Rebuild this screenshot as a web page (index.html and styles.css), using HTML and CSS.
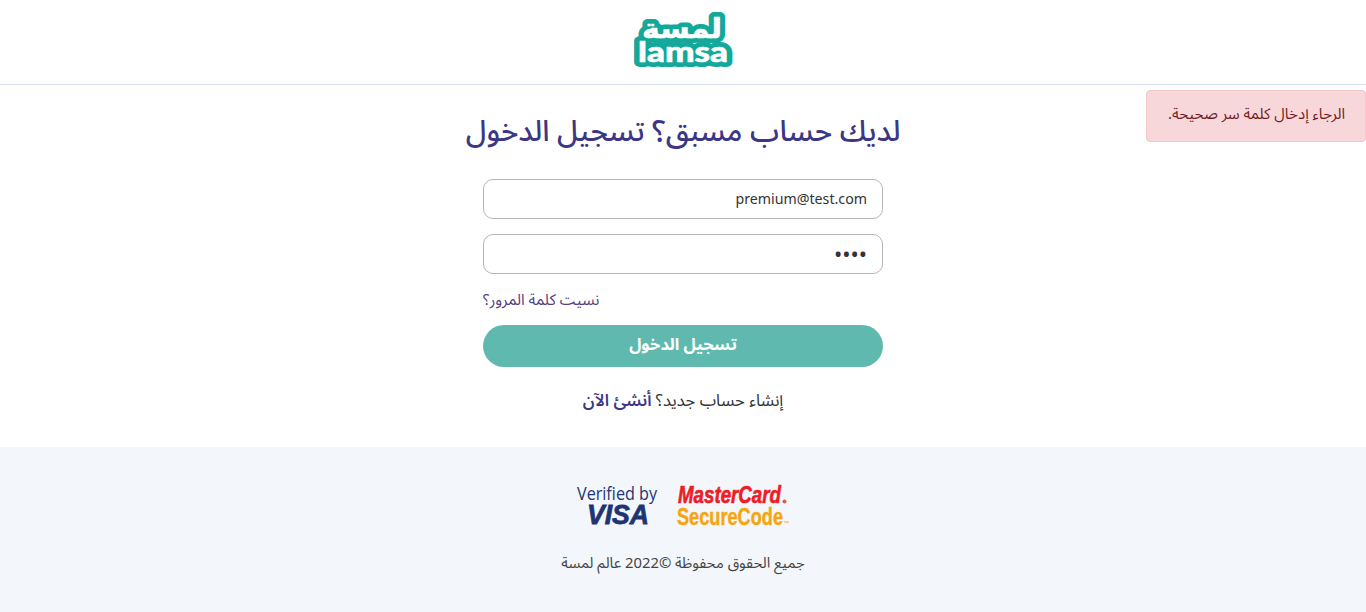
FILE: index.html
```html
<!DOCTYPE html>
<html lang="ar" dir="rtl">
<head>
<meta charset="utf-8">
<title>لمسة</title>
<link rel="stylesheet" href="styles.css">
</head>
<body>
<header class="site-header">
  <svg class="logo" width="104" height="70" viewBox="0 0 104 70" aria-label="lamsa">
    <g class="logo-outline">
      <text x="51" y="32" class="logo-ar" text-anchor="middle" textLength="80" lengthAdjust="spacingAndGlyphs">لمسة</text>
      <text x="52" y="56" class="logo-en" text-anchor="middle" textLength="90" lengthAdjust="spacingAndGlyphs">lamsa</text>
    </g>
    <g class="logo-fill">
      <text x="51" y="32" class="logo-ar" text-anchor="middle" textLength="80" lengthAdjust="spacingAndGlyphs">لمسة</text>
      <text x="52" y="56" class="logo-en" text-anchor="middle" textLength="90" lengthAdjust="spacingAndGlyphs">lamsa</text>
    </g>
  </svg>
</header>
<main class="login">
  <h1 class="title">لديك حساب مسبق؟ تسجيل الدخول</h1>
  <form class="form">
    <input class="field" type="text" dir="ltr" value="premium@test.com">
    <input class="field field-pass" type="password" dir="ltr" value="1234">
    <a class="forgot" href="#">نسيت كلمة المرور؟</a>
    <button class="submit" type="button">تسجيل الدخول</button>
    <p class="signup">إنشاء حساب جديد؟ <a href="#">أنشئ الآن</a></p>
  </form>
</main>
<footer class="site-footer">
  <div class="badges">
    <svg class="badge" width="90" height="46" viewBox="0 0 90 46" aria-label="Verified by Visa">
      <text x="44" y="15" class="visa-top" text-anchor="middle" textLength="80" lengthAdjust="spacingAndGlyphs">Verified by</text>
      <text x="45" y="39" class="visa-name" text-anchor="middle" textLength="62" lengthAdjust="spacingAndGlyphs">VISA</text>
    </svg>
    <svg class="badge" width="116" height="46" viewBox="0 0 116 46" aria-label="MasterCard SecureCode">
      <text x="1" y="18" class="mc-top" textLength="103" lengthAdjust="spacingAndGlyphs">MasterCard</text>
      <circle cx="107.5" cy="16.5" r="2" class="mc-dot"></circle>
      <text x="0" y="40" class="mc-bottom" textLength="106" lengthAdjust="spacingAndGlyphs">SecureCode</text>
      <text x="106" y="40" class="mc-tm">™</text>
    </svg>
  </div>
  <p class="copy">جميع الحقوق محفوظة ©2022 عالم لمسة</p>
</footer>
<div class="toast">الرجاء إدخال كلمة سر صحيحة.</div>
</body>
</html>
```
FILE: styles.css
```css
* { box-sizing: border-box; }
html, body { margin: 0; padding: 0; }
body {
  position: relative;
  height: 612px;
  overflow: hidden;
  background: #fff;
  color: #333;
  font-family: "Noto Sans", "Noto Sans Arabic", "DejaVu Sans", sans-serif;
  font-size: 15px;
  display: flex;
  flex-direction: column;
}
.site-header {
  height: 85px;
  border-bottom: 1px solid #d3dfea;
  display: flex;
  justify-content: center;
  align-items: flex-start;
  padding-top: 6px;
  flex: none;
}
.logo-outline text { fill: #12a89a; stroke: #12a89a; stroke-width: 10px; stroke-linejoin: round; }
.logo-fill text { fill: #fff; stroke: #fff; stroke-width: .6px; stroke-linejoin: round; }
.logo-ar { font-family: "DejaVu Sans", sans-serif; font-weight: 700; font-size: 27px; }
.logo-en { font-family: "Lato", sans-serif; font-weight: 900; font-size: 29px; }
.login {
  height: 362px;
  flex: none;
  display: flex;
  flex-direction: column;
  align-items: center;
  padding-top: 23px;
}
.title {
  margin: 0 0 27px;
  font-size: 29.3px;
  line-height: 44px;
  font-weight: 500;
  color: #3c3785;
}
.form { width: 400px; display: flex; flex-direction: column; }
.field {
  height: 40px;
  width: 100%;
  margin-bottom: 15px;
  border: 1px solid #b5b5b5;
  border-radius: 10px;
  padding: 0 15px 2px;
  text-align: right;
  font-family: "Noto Sans", sans-serif;
  font-size: 14.2px;
  color: #333;
  background: #fff;
  outline: none;
}
.field-pass { font-size: 22px; padding-bottom: 2px; }
.forgot {
  align-self: flex-end;
  color: #54407f;
  text-decoration: none;
  font-size: 15.3px;
  line-height: 20px;
  margin-bottom: 2px;
}
.submit {
  margin-top: 14px;
  height: 42px;
  border: 0;
  border-radius: 21px;
  background: #60b9ae;
  color: #fff;
  font-family: inherit;
  font-size: 16.5px;
  font-weight: 700;
  padding: 0 0 4px;
}
.signup { margin: 21px 0 0; text-align: center; font-size: 16.6px; line-height: 24px; color: #333; }
.signup a { color: #3c3785; font-weight: 600; text-decoration: none; }
.site-footer {
  flex: 1;
  background: #f3f6fb;
  display: flex;
  flex-direction: column;
  align-items: center;
  padding-top: 38px;
}
.badges { display: flex; gap: 14px; direction: ltr; }
.badge { overflow: visible; }
.visa-top { font-family: "Open Sans", sans-serif; font-size: 18.5px; fill: #1f3473; }
.visa-name { font-family: "Liberation Sans", sans-serif; font-weight: 700; font-style: italic; font-size: 27px; fill: #1f3473; stroke: #1f3473; stroke-width: .8px; }
.mc-top { font-family: "Liberation Sans", sans-serif; font-weight: 700; font-style: italic; font-size: 24px; fill: #ee1c25; stroke: #ee1c25; stroke-width: .6px; }
.mc-bottom { font-family: "Liberation Sans", sans-serif; font-weight: 700; font-size: 24px; fill: #f5a60e; stroke: #f5a60e; stroke-width: .4px; }
.mc-dot { fill: #e8564a; }
.mc-tm { font-family: "Liberation Sans", sans-serif; font-size: 6px; fill: #f5a60e; }
.copy { margin: 19px 0 0; font-size: 14.8px; line-height: 24px; color: #444; }
.toast {
  position: absolute;
  top: 90px;
  right: 0;
  width: 220px;
  height: 52px;
  background: #f8d7da;
  border: 1px solid #f5c6cb;
  border-radius: 4px;
  color: #721c24;
  font-size: 15.1px;
  line-height: 44px;
  padding: 0 20px;
  text-align: right;
}
```
